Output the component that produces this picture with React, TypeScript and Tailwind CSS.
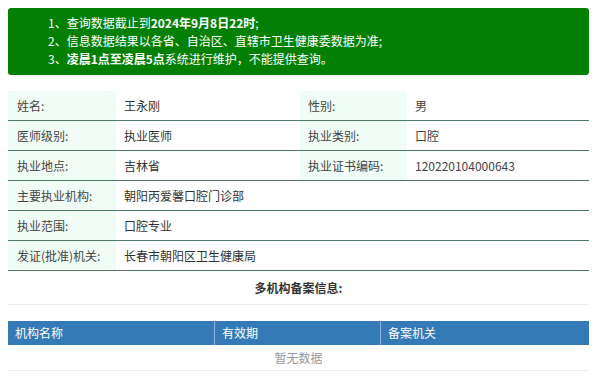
import React from "react";

type Row = { label: string; value: string; label2?: string; value2?: string };

const rows: Row[] = [
  { label: "姓名:", value: "王永刚", label2: "性别:", value2: "男" },
  { label: "医师级别:", value: "执业医师", label2: "执业类别:", value2: "口腔" },
  { label: "执业地点:", value: "吉林省", label2: "执业证书编码:", value2: "120220104000643" },
  { label: "主要执业机构:", value: "朝阳丙爱馨口腔门诊部" },
  { label: "执业范围:", value: "口腔专业" },
  { label: "发证(批准)机关:", value: "长春市朝阳区卫生健康局" },
];

export default function App() {
  return (
    <div className="w-[600px] h-[379px] bg-white overflow-hidden text-[12px] text-[#333] font-['Microsoft_YaHei','Noto_Sans_CJK_SC',sans-serif]">
      <div className="pl-2 pr-[11px] pt-2">
        {/* 提示 */}
        <div className="bg-[#038003] rounded-[3px] text-white leading-[18px] pl-[40px] pt-[6px] pb-[7px]">
          <div>
            1、查询数据截止到<b>2024年9月8日22时</b>;
          </div>
          <div>2、信息数据结果以各省、自治区、直辖市卫生健康委数据为准;</div>
          <div>
            3、<b>凌晨1点至凌晨5点</b>系统进行维护，不能提供查询。
          </div>
        </div>

        {/* 基本信息 */}
        <div className="mt-[16px]">
          {rows.map((r) => (
            <div
              key={r.label}
              className="grid grid-cols-[108px_184px_107px_1fr] h-[30px] border-b-[1.5px] border-[#4f7b69] items-stretch"
            >
              <div className="bg-[#f0fdf7] pl-[9px] flex items-center text-[#444]">{r.label}</div>
              <div className="pl-[8px] flex items-center">{r.value}</div>
              <div className={`${r.label2 ? "bg-[#f0fdf7]" : ""} pl-[8px] flex items-center text-[#444]`}>
                {r.label2}
              </div>
              <div className="pl-[8px] flex items-center text-[#444]">{r.value2}</div>
            </div>
          ))}
        </div>

        {/* 多机构备案信息 */}
        <div className="h-[34px] flex items-center justify-center font-bold border-b border-[#eeeeee]">
          多机构备案信息:
        </div>

        <div className="mt-[16px]">
          <div className="grid grid-cols-[207px_166px_1fr] h-[24px] bg-[#337ab7] text-white">
            <div className="pl-[7px] flex items-center border-r border-[#8fb5da]">机构名称</div>
            <div className="pl-[7px] flex items-center border-r border-[#8fb5da]">有效期</div>
            <div className="pl-[7px] flex items-center">备案机关</div>
          </div>
          <div className="h-[26px] flex items-center justify-center text-[#999] border-b border-[#eeeeee]">
            暂无数据
          </div>
        </div>
      </div>
    </div>
  );
}
